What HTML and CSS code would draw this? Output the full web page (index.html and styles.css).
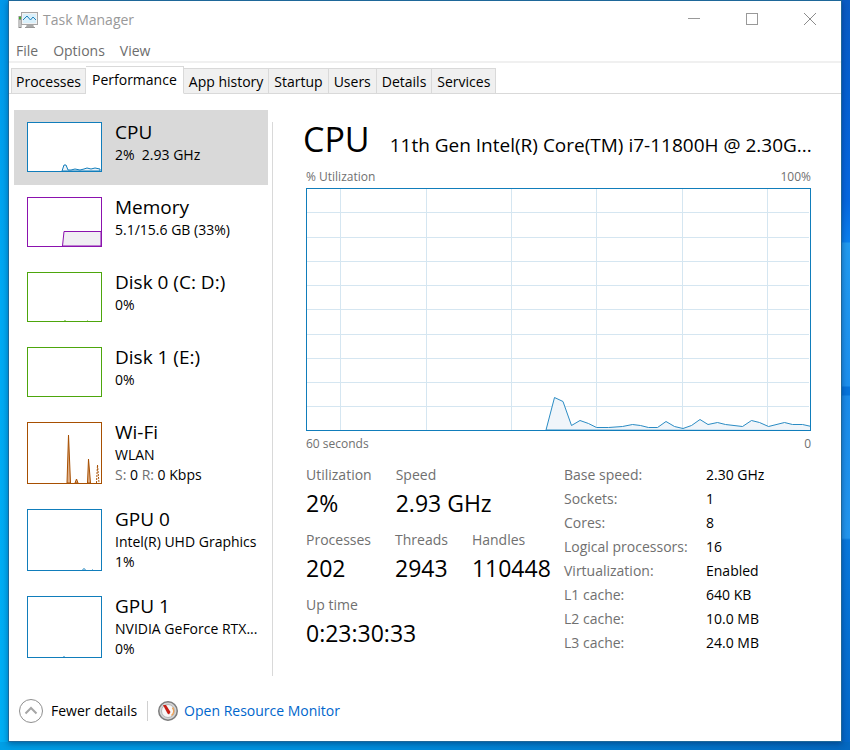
FILE: index.html
```html
<!DOCTYPE html>
<html lang="en">
<head>
<meta charset="utf-8">
<title>Task Manager</title>
<link rel="stylesheet" href="styles.css">
</head>
<body>
<div class="window">
  <header class="titlebar">
    <svg class="app-icon" width="20" height="18" viewBox="0 0 20 18" aria-hidden="true">
      <rect x="0.500" y="5" width="3" height="12" fill="#8c8c8c"/>
      <rect x="1" y="6" width="2" height="2" fill="#3fae2a"/>
      <rect x="1" y="9" width="2" height="7" fill="#c4c4c4"/>
      <path d="M9 13h6l1 3H8z" fill="#a9a9a9"/>
      <path d="M7 16h10v1H7z" fill="#999"/>
      <rect x="3.500" y="1.500" width="16" height="12" fill="#f2f2f2" stroke="#a6a6a6"/>
      <rect x="5" y="3" width="13" height="9" fill="#d9f0fb"/>
      <path d="M5 9l4-4 3.500 4L15 6l3 3" fill="none" stroke="#2383bb"/>
    </svg>
    <h1 class="title">Task Manager</h1>
    <div class="caption-buttons">
      <button type="button" aria-label="Minimize"><svg width="12" height="12" viewBox="0 0 12 12"><path d="M0 5.500h12" stroke="#999"/></svg></button>
      <button type="button" aria-label="Maximize"><svg width="12" height="12" viewBox="0 0 12 12"><rect x="0.500" y="0.500" width="11" height="11" fill="none" stroke="#999"/></svg></button>
      <button type="button" aria-label="Close"><svg width="12" height="12" viewBox="0 0 12 12"><path d="M0 0l12 12M12 0L0 12" stroke="#8c8c8c"/></svg></button>
    </div>
  </header>
  <nav class="menu">
    <button type="button">File</button>
    <button type="button">Options</button>
    <button type="button">View</button>
  </nav>
  <div class="tabs" role="tablist">
    <button type="button" role="tab">Processes</button>
    <button type="button" role="tab" class="active" aria-selected="true">Performance</button>
    <button type="button" role="tab">App history</button>
    <button type="button" role="tab">Startup</button>
    <button type="button" role="tab">Users</button>
    <button type="button" role="tab">Details</button>
    <button type="button" role="tab">Services</button>
  </div>
  <main class="content">
    <div class="sidebar">
      <button type="button" class="item selected">
        <svg class="thumb blue" viewBox="0 0 75 50"><path class="area" d="M35 49l2-6h2l2 5h3l4-1 5 1 4-1 3-1 4 1 4-1 5 1v2z"/><rect x="0.500" y="0.500" width="74" height="49"/></svg>
        <span class="info"><span class="name">CPU</span><span class="line">2%&nbsp; 2.93 GHz</span></span>
      </button>
      <button type="button" class="item">
        <svg class="thumb purple" viewBox="0 0 75 50"><path class="area" d="M35.500 49l1.500-14.500h37V49z"/><rect x="0.500" y="0.500" width="74" height="49"/></svg>
        <span class="info"><span class="name">Memory</span><span class="line">5.1/15.6 GB (33%)</span></span>
      </button>
      <button type="button" class="item">
        <svg class="thumb green" viewBox="0 0 75 50"><path class="faint" d="M37 48.500h2M60 48.500h1"/><rect x="0.500" y="0.500" width="74" height="49"/></svg>
        <span class="info"><span class="name">Disk 0 (C: D:)</span><span class="line">0%</span></span>
      </button>
      <button type="button" class="item">
        <svg class="thumb green" viewBox="0 0 75 50"><rect x="0.500" y="0.500" width="74" height="49"/></svg>
        <span class="info"><span class="name">Disk 1 (E:)</span><span class="line">0%</span></span>
      </button>
      <button type="button" class="item">
        <svg class="thumb orange tall" viewBox="0 0 75 62"><path class="area" d="M40 61l1.500-48 2 48zM48 61l1.500-4 1.500 4zM60.500 61l1-24 2 24z"/><path class="dotted" d="M69.500 61l1-18 1.500 18"/><rect x="0.500" y="0.500" width="74" height="61"/></svg>
        <span class="info"><span class="name">Wi-Fi</span><span class="line">WLAN</span><span class="line"><span class="dim">S:</span> 0 <span class="dim">R:</span> 0 Kbps</span></span>
      </button>
      <button type="button" class="item">
        <svg class="thumb blue tall" viewBox="0 0 75 62"><path class="faint" d="M55 60.500h4M56 59.500h2M65 60.500h1"/><rect x="0.500" y="0.500" width="74" height="61"/></svg>
        <span class="info"><span class="name">GPU 0</span><span class="line">Intel(R) UHD Graphics</span><span class="line">1%</span></span>
      </button>
      <button type="button" class="item">
        <svg class="thumb blue tall" viewBox="0 0 75 62"><path class="faint" d="M36 60.500h2"/><rect x="0.500" y="0.500" width="74" height="61"/></svg>
        <span class="info"><span class="name">GPU 1</span><span class="line">NVIDIA GeForce RTX...</span><span class="line">0%</span></span>
      </button>
    </div>
    <section class="detail">
      <div class="heading"><h2>CPU</h2><p>11th Gen Intel(R) Core(TM) i7-11800H @ 2.30G...</p></div>
      <div class="axis axis-top"><span>% Utilization</span><span>100%</span></div>
      <svg class="chart" viewBox="0 0 505 243" preserveAspectRatio="none" role="img" aria-label="CPU utilization over 60 seconds">
        <path class="grid" d="M34.500 1v241M120.500 1v241M205.500 1v241M290.500 1v241M376.500 1v241M461.500 1v241M1 24.500h502M1 49.500h502M1 73.500h502M1 97.500h502M1 121.500h502M1 146.500h502M1 170.500h502M1 194.500h502M1 218.500h502"/>
        <path class="curve" d="M240 242l8.500-32.500 8.500 4 8.500 24 8.500-5 8.500 3 8 4h12l14-1 10-2 8 1 8 2h9l8.500-6 8.500 5 8.500 2 8.500-3 8.500-6 8 5 9.500-2 8 2 17 2 9-6 8 2 9 4 16-4 8 2h10l9 2v4z"/>
        <rect class="frame" x="0.500" y="0.500" width="504" height="242"/>
      </svg>
      <div class="axis axis-bottom"><span>60 seconds</span><span>0</span></div>
      <div class="stats">
        <div class="live">
          <dl><div><dt>Utilization</dt><dd>2%</dd></div><div><dt>Speed</dt><dd>2.93 GHz</dd></div></dl>
          <dl><div><dt>Processes</dt><dd>202</dd></div><div><dt>Threads</dt><dd>2943</dd></div><div><dt>Handles</dt><dd>110448</dd></div></dl>
          <dl><div><dt>Up time</dt><dd>0:23:30:33</dd></div></dl>
        </div>
        <table class="specs">
          <tr><th scope="row">Base speed:</th><td>2.30 GHz</td></tr>
          <tr><th scope="row">Sockets:</th><td>1</td></tr>
          <tr><th scope="row">Cores:</th><td>8</td></tr>
          <tr><th scope="row">Logical processors:</th><td>16</td></tr>
          <tr><th scope="row">Virtualization:</th><td>Enabled</td></tr>
          <tr><th scope="row">L1 cache:</th><td>640 KB</td></tr>
          <tr><th scope="row">L2 cache:</th><td>10.0 MB</td></tr>
          <tr><th scope="row">L3 cache:</th><td>24.0 MB</td></tr>
        </table>
      </div>
    </section>
  </main>
  <footer class="footer">
    <button type="button" class="fewer">
      <svg width="24" height="24" viewBox="0 0 24 24" aria-hidden="true"><circle cx="12" cy="12" r="11.500" fill="#fff" stroke="#8f8f8f"/><path d="M6.500 14.500L12 9l5.500 5.500" fill="none" stroke="#a6a6a6" stroke-width="2"/></svg>
      Fewer details
    </button>
    <a class="monitor" href="#">
      <svg width="20" height="20" viewBox="0 0 20 20" aria-hidden="true"><circle cx="10" cy="10" r="9.250" fill="#d4d4d4" stroke="#7c7c7c" stroke-width="1.500"/><circle cx="10" cy="10" r="6.500" fill="#f7f7f7" stroke="#b4b4b4"/><path d="M14.500 6.500a6 6 0 0 1-1 8" fill="none" stroke="#f0a050" stroke-width="1.500"/><path d="M5 4l3 0 4.500 7-1.500 2.500-1.500-1z" fill="#c81e14"/></svg>
      Open Resource Monitor
    </a>
  </footer>
</div>
</body>
</html>
```
FILE: styles.css
```css
* { box-sizing: border-box; }

body {
  margin: 0;
  min-height: 100vh;
  display: flex;
  padding: 0 8px 8px;
  font: 14px/20px "Open Sans", "Noto Sans", sans-serif;
  color: #000;
  background:
    linear-gradient(#0a5cc4 0, #0560d0 80px, #0668e0 200px, #0a80ee 242px, #219bf0 243px, #1c90ee 386px, #0674dc 387px, #0674dc 395px, #1a8cea 396px, #2296ee 538px, #0878dc 540px, #0468c8 750px) right top / 8px 742px no-repeat,
    linear-gradient(#0098ea, #00aaf4 300px, #00aff5) left top / 8px 742px no-repeat,
    linear-gradient(90deg, #009fe6, #0090de 40%, #0468c0);
}

button {
  font: inherit;
  color: inherit;
  background: none;
  border: 0;
  padding: 0;
  text-align: left;
}

.window {
  flex: 1;
  min-width: 0;
  display: flex;
  flex-direction: column;
  background: #fff;
  border: 1px solid #1e6799;
  box-shadow: 0 2px 6px rgba(0, 30, 80, 0.45);
}

.titlebar {
  display: flex;
  align-items: center;
  height: 37px;
  padding: 0 2px 0 9px;
}
.title {
  flex: 1;
  margin: 0 0 0 5px;
  font-size: 14px;
  font-weight: 400;
  color: #999;
}
.caption-buttons {
  display: flex;
  align-self: flex-start;
}
.caption-buttons button {
  width: 58px;
  height: 36px;
  display: flex;
  align-items: center;
  justify-content: center;
}

.menu {
  display: flex;
  gap: 15px;
  height: 25px;
  padding: 2px 0 0 7px;
  align-items: center;
  border-bottom: 2px solid #f0f0f0;
  color: #6d6d6d;
}

.tabs {
  display: flex;
  align-items: flex-end;
  height: 31px;
  padding-left: 2px;
  box-shadow: inset 0 -1px #d9d9d9;
}
.tabs button {
  height: 26px;
  padding: 2px 5px 0;
  background: #f0f0f0;
  border: 1px solid #d9d9d9;
  border-left-width: 0;
}
.tabs button:first-child {
  padding: 2px 4px 0;
  border-left-width: 1px;
}
.tabs .active {
  height: 28px;
  padding: 0 6px;
  background: #fff;
  border-bottom-color: #fff;
}

.content {
  flex: 1;
  display: flex;
  padding: 16px 30px 0 5px;
}

.sidebar {
  flex: none;
  width: 254px;
}
.item {
  display: flex;
  gap: 13px;
  width: 100%;
  padding: 12px 0 13px 13px;
  align-items: flex-start;
}
.selected { background: #d9d9d9; }
.thumb {
  flex: none;
  width: 75px;
  height: 50px;
  background: #fff;
  fill: none;
  stroke: currentColor;
}
.tall { height: 62px; }
.thumb .area { fill: #edf3f8; }
.thumb .faint { stroke-opacity: 0.5; }
.purple .area { fill: #f0eef3; }
.orange .area { fill: #e0b088; }
.dotted { stroke-dasharray: 2 1; }
.blue { color: #117dbb; }
.purple { color: #8b12ae; }
.green { color: #4da60c; }
.orange { color: #a74f01; }
.info {
  display: flex;
  flex-direction: column;
  margin-top: -2px;
  height: 50px;
}
.name {
  font-size: 19px;
  line-height: 25px;
}
.line { white-space: nowrap; }
.dim { color: #707070; }

.detail {
  flex: 1;
  min-width: 0;
  margin: 12px 0 0 4px;
  padding-left: 33px;
  border-left: 1px solid #d9d9d9;
}
.heading {
  display: flex;
  align-items: baseline;
  gap: 20px;
  height: 44px;
  margin-left: -3px;
}
.heading h2 {
  margin: 0;
  font-size: 34px;
  line-height: 34px;
  font-weight: 400;
}
.heading p {
  flex: 1;
  min-width: 0;
  margin: 0;
  font-size: 19px;
  white-space: nowrap;
}
.axis {
  display: flex;
  justify-content: space-between;
  font-size: 12px;
  color: #707070;
}
.axis-top { height: 22px; padding-top: 1px; }
.axis-bottom { height: 34px; padding-top: 3px; }

.chart {
  display: block;
  width: 100%;
  height: 243px;
}
.chart .grid { stroke: #d5e6f1; }
.chart .curve { fill: #f0f5fa; stroke: #2b8cc4; }
.chart .frame { fill: none; stroke: #117dbb; }

.stats {
  display: flex;
  gap: 15px;
}
.live { flex: none; width: 243px; }
.live dl {
  display: flex;
  gap: 24px;
  height: 65px;
  margin: 0;
}
dt { color: #707070; }
dd {
  margin: 0;
  font-size: 23px;
  line-height: 36px;
}
.specs {
  border-collapse: collapse;
  height: 192px;
  line-height: 20px;
}
.specs th {
  width: 142px;
  padding: 0 0 4px;
  text-align: left;
  font-weight: 400;
  color: #707070;
}
.specs td { padding: 0 0 4px; }

.footer {
  display: flex;
  align-items: center;
  height: 65px;
  padding: 5px 0 0 10px;
}
.fewer, .monitor {
  display: flex;
  align-items: center;
  gap: 8px;
}
.fewer {
  padding-right: 10px;
}
.monitor {
  gap: 6px;
  padding-left: 10px;
  color: #0066cc;
  text-decoration: none;
  border-left: 1px solid #d0d0d0;
}
```
